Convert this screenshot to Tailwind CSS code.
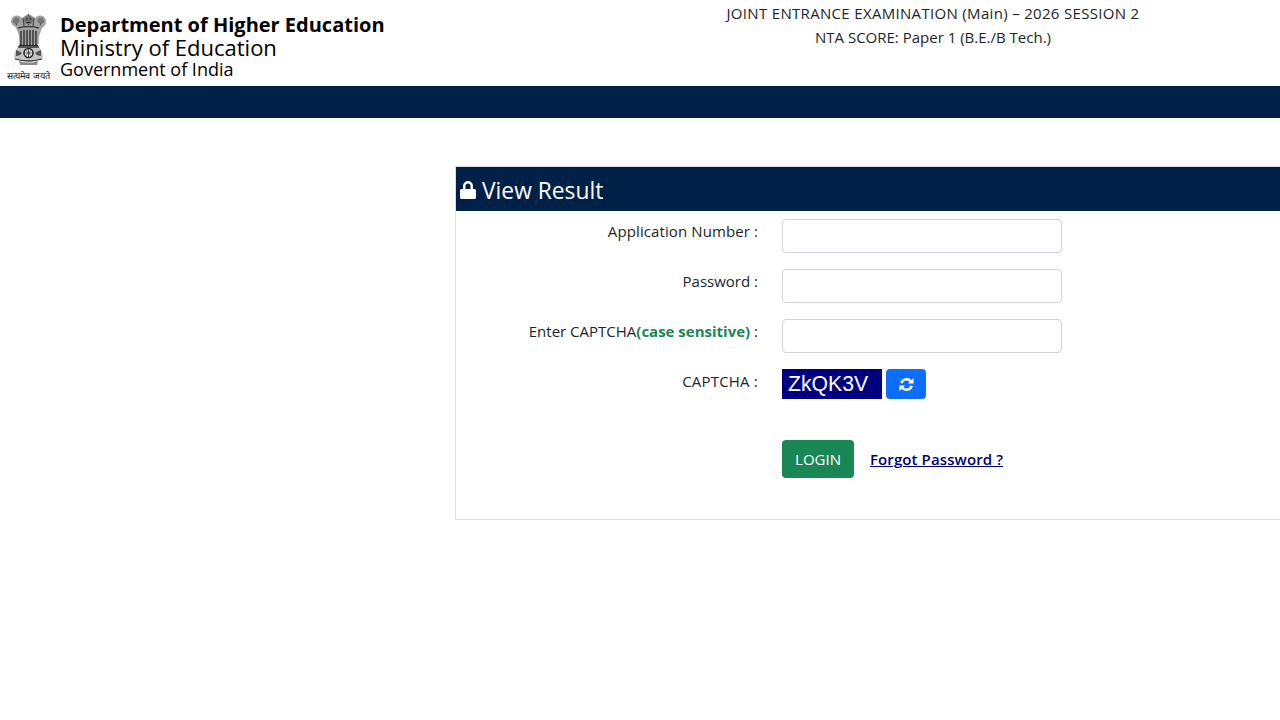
<!DOCTYPE html>
<html>
  <head>
    <meta charset="UTF-8" />
    <title>View Result</title>
    <script src="https://cdn.jsdelivr.net/npm/@tailwindcss/browser@4"></script>
  </head>
  <body class="bg-white text-[#212529] font-['Open_Sans',sans-serif] h-[720px] overflow-hidden">
    <header class="h-[86px] flex">
      <div class="w-[60px] h-[86px] flex flex-col items-center pt-[12px] pr-[3px] shrink-0">
        <svg viewBox="0 0 37 55" class="w-[37px] h-[55px]">
          <!-- lions -->
          <path d="M12 6q6.500-7 13 0 2-3 6-2.500 5 1 5 6 0 4-3.500 6l-1.500 3-2 6-.5 8H9.500L9 24l-2-6-1.500-3Q1 12.500 1 9.500q0-5 5-6 4-.5 6 2.500z" fill="#a3a3a3" />
          <path d="M13 6l1 8M18.500 2v11M24 6l-1 8M5 6q-1 4 2 7M32 6q1 4-2 7M3 9l4 3M34 9l-4 3" stroke="#4b4b4b" stroke-width="1.300" fill="none" />
          <circle cx="18.500" cy="8" r="4.500" fill="#6f6f6f" />
          <circle cx="6.500" cy="8.500" r="3" fill="#777" />
          <circle cx="30.500" cy="8.500" r="3" fill="#777" />
          <path d="M16 7h1.500M19.500 7H21M17 10.500h3" stroke="#222" stroke-width="1.100" fill="none" />
          <path d="M8 16q10.500-3 21 0" stroke="#3d3d3d" stroke-width="1.600" fill="none" />
          <!-- legs -->
          <path d="M11 19v14M14 18v15M17 18v15M20 18v15M23 18v15M26 19v14" stroke="#2f2f2f" stroke-width="1.400" fill="none" />
          <path d="M9 33.500h19" stroke="#222" stroke-width="1.500" />
          <!-- abacus with wheel -->
          <path d="M8 35h21q5 6 3.500 12-14 4-28 0Q3 41 8 35z" fill="#c4c4c4" />
          <circle cx="18.500" cy="41" r="4.500" fill="#fff" stroke="#222" stroke-width="1.500" />
          <path d="M18.500 36.500v9M14 41h9M15.300 37.800l6.400 6.400M21.700 37.800l-6.400 6.400" stroke="#333" stroke-width=".8" />
          <path d="M6 38q3 1 6 3-2 3-6 3zM31 38q-3 1-6 3 2 3 6 3z" fill="#555" />
          <path d="M8 35h21M5 47q13.500 4 27 0" stroke="#333" stroke-width="1.300" fill="none" />
          <path d="M9 49q9.500 3 19 0l-1 4H10z" fill="#8a8a8a" />
        </svg>
        <span class="mt-[4px] text-[9px] leading-[10px] whitespace-nowrap text-black">सत्यमेव जयते</span>
      </div>
      <div class="w-[500px] pt-[12px] text-black">
        <div class="text-[20px] leading-[25px] font-bold">Department of Higher Education</div>
        <div class="text-[22px] leading-[20px]">Ministry of Education</div>
        <div class="text-[18px] leading-[20px] mt-[2px]">Government of India</div>
      </div>
      <div class="ml-[80px] w-[586px] pt-[1px] text-center text-[15px] leading-[24px]">
        <div class="tracking-[0.32px]">JOINT ENTRANCE EXAMINATION (Main) – 2026 SESSION 2</div>
        <div>NTA SCORE: Paper 1 (B.E./B Tech.)</div>
      </div>
    </header>
    <div class="h-[32px] bg-[#002147]"></div>
    <main class="ml-[455px] mt-[48px] h-[354px] border border-[#dfdfdf] border-r-0">
      <h2 class="h-[44px] bg-[#002147] text-white flex items-center pl-[4px] pt-[1px] gap-[6px] text-[22.8px]">
        <svg viewBox="0 0 16 18" class="w-[16px] h-[18px]" fill="currentColor">
          <path d="M3 8V5a5 5 0 0 1 10 0v3h1.500q1.500 0 1.500 1.500v7q0 1.500-1.500 1.500h-13Q0 18 0 16.500v-7Q0 8 1.500 8zm2.500 0h5V5a2.500 2.500 0 0 0-5 0z" />
        </svg>
        <span class="pt-[4px]">View Result</span>
      </h2>
      <form class="grid grid-cols-[302px_1fr] gap-x-[24px] pt-[8px] text-[15px] text-right">
        <label class="h-[50px] leading-[24px] tracking-[0.1px]">Application Number :</label>
        <div><input type="text" class="block w-[280px] h-[34px] border border-[#ced4da] rounded-[4px]" /></div>
        <label class="h-[50px] leading-[24px]">Password :</label>
        <div><input type="password" class="block w-[280px] h-[34px] border border-[#ced4da] rounded-[4px]" /></div>
        <label class="h-[50px] leading-[24px]">Enter CAPTCHA<b class="text-[#198754]">(case sensitive)</b> :</label>
        <div><input type="text" class="block w-[280px] h-[34px] border border-[#ced4da] rounded-[4px]" /></div>
        <label class="leading-[24px] tracking-[0.2px]">CAPTCHA :</label>
        <div class="flex gap-[4px] text-left">
          <div class="w-[100px] h-[30px] bg-[#000080] text-white font-['Liberation_Sans',sans-serif] text-[21.2px] leading-[30px] pl-[6px]">ZkQK3V</div>
          <button type="button" class="w-[40px] h-[30px] bg-[#0d6efd] rounded-[4px] flex items-center justify-center text-white">
            <svg viewBox="0 0 16 16" class="w-[15px] h-[15px]" fill="none" stroke="currentColor" stroke-width="2.600">
              <path d="M2.500 6.500A5.800 5.800 0 0 1 12.500 4.500" />
              <path d="M13.500 9.500A5.800 5.800 0 0 1 3.500 11.500" />
              <path d="M15.500 1v6h-6zM.5 15V9h6z" fill="currentColor" stroke="none" />
            </svg>
          </button>
        </div>
        <div></div>
        <div class="flex items-center gap-[16px] mt-[41px] text-left">
          <button type="button" class="w-[72px] h-[38px] bg-[#198754] text-white rounded-[4px]">LOGIN</button>
          <a href="#" class="text-[#000080] font-semibold underline tracking-[0.1px]">Forgot Password ?</a>
        </div>
      </form>
    </main>
  </body>
</html>
